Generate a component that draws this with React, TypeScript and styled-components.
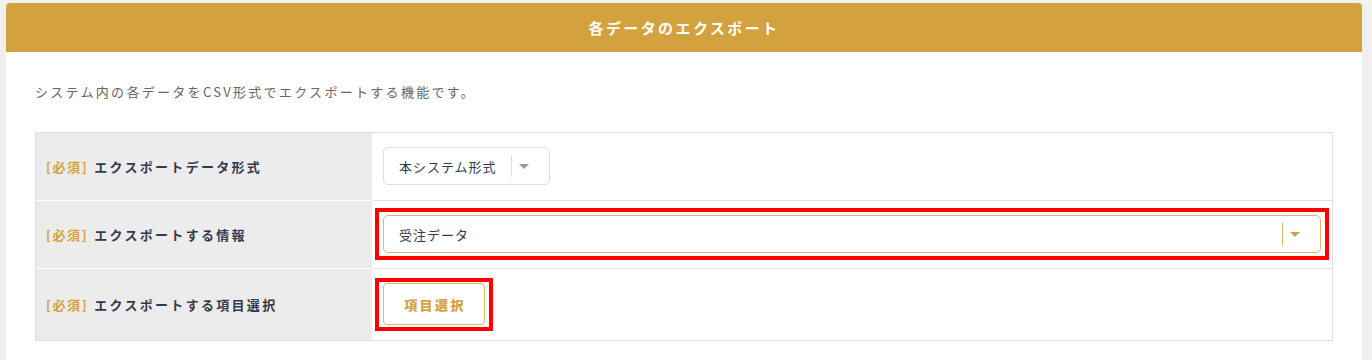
import { FC, ReactNode } from "react";
import styled, { createGlobalStyle } from "styled-components";

const GlobalStyle = createGlobalStyle`
  html, body {
    margin: 0;
    padding: 0;
    background: #f0f0ee;
    font-family: "Noto Sans CJK JP", "Noto Sans", sans-serif;
  }
`;

type Row = {
  label: string;
  content: ReactNode;
};

const Select: FC<{ value: string; active?: boolean; wide?: boolean }> = ({
  value,
  active,
  wide,
}) => (
  <StyledSelect $active={active} $wide={wide}>
    <StyledSelectValue>{value}</StyledSelectValue>
    <StyledDivider $active={active} />
    <StyledCaret $active={active} />
  </StyledSelect>
);

const App: FC = () => {
  const rows: Row[] = [
    {
      label: "エクスポートデータ形式",
      content: <Select value="本システム形式" />,
    },
    {
      label: "エクスポートする情報",
      content: (
        <StyledHighlight $inset="-7px -8px" $grow>
          <Select value="受注データ" active wide />
        </StyledHighlight>
      ),
    },
    {
      label: "エクスポートする項目選択",
      content: (
        <StyledHighlight $inset="-5px -8px -6px">
          <StyledButton>項目選択</StyledButton>
        </StyledHighlight>
      ),
    },
  ];

  return (
    <>
      <GlobalStyle />
      <StyledPage>
        <StyledCard>
          <StyledHeader>各データのエクスポート</StyledHeader>
          <StyledBody>
            <StyledDescription>
              システム内の各データをCSV形式でエクスポートする機能です。
            </StyledDescription>
            <StyledTable>
              {rows.map((row) => (
                <StyledRow key={row.label}>
                  <StyledLabelCell>
                    <StyledRequired>[必須]</StyledRequired>
                    {row.label}
                  </StyledLabelCell>
                  <StyledValueCell>{row.content}</StyledValueCell>
                </StyledRow>
              ))}
            </StyledTable>
          </StyledBody>
        </StyledCard>
      </StyledPage>
    </>
  );
};

export default App;

const gold = "#d3a23f";

const StyledPage = styled.div`
  padding: 3px 10px 0 6px;
`;

const StyledCard = styled.div`
  background: #fff;
  border-radius: 4px 4px 0 0;
  overflow: hidden;
`;

const StyledHeader = styled.div`
  height: 49px;
  background: ${gold};
  color: #fff;
  font-size: 15px;
  font-weight: bold;
  letter-spacing: 2.4px;
  display: flex;
  align-items: center;
  justify-content: center;
`;

const StyledBody = styled.div`
  padding: 30px 29px 20px;
`;

const StyledDescription = styled.p`
  margin: 0 0 30px;
  line-height: 20px;
  font-size: 13px;
  letter-spacing: 2.3px;
  color: #666;
`;

const StyledTable = styled.div`
  border: 1px solid #dedede;
`;

const StyledRow = styled.div`
  display: grid;
  grid-template-columns: 336px 1fr;
  & + & > div {
    border-top: 1px solid #e0e0e0;
  }
  & + & > div:first-child {
    border-top-color: #fff;
  }
`;

const StyledLabelCell = styled.div`
  background: #ececec;
  display: flex;
  align-items: center;
  padding-left: 10px;
  font-size: 13px;
  font-weight: bold;
  letter-spacing: 2.3px;
  color: #333a4f;
`;

const StyledRequired = styled.span`
  color: ${gold};
  margin-right: 6px;
  letter-spacing: 1.6px;
`;

const StyledValueCell = styled.div`
  display: flex;
  align-items: center;
  padding: 14px 11px 15px 11px;
  min-height: 38px;
`;

const StyledHighlight = styled.div<{ $inset: string; $grow?: boolean }>`
  position: relative;
  display: flex;
  flex: ${(p) => (p.$grow ? 1 : "0 0 auto")};
  &::after {
    content: "";
    position: absolute;
    inset: ${(p) => p.$inset};
    border: 4px solid #ff0000;
    pointer-events: none;
  }
`;

const StyledSelect = styled.div<{ $active?: boolean; $wide?: boolean }>`
  display: flex;
  align-items: center;
  height: 38px;
  box-sizing: border-box;
  flex: ${(p) => (p.$wide ? 1 : "0 0 auto")};
  padding: 0 20px 0 15px;
  border: 1px solid ${(p) => (p.$active ? "#dcb86d" : "#dddddd")};
  border-radius: 5px;
  background: #fff;
  font-size: 13px;
  letter-spacing: 1px;
  color: #333a4c;
`;

const StyledSelectValue = styled.span`
  flex: 1;
  padding-right: 14px;
`;

const StyledDivider = styled.span<{ $active?: boolean }>`
  width: 1px;
  height: 22px;
  background: ${(p) => (p.$active ? "#d8b262" : "#dddddd")};
`;

const StyledCaret = styled.span<{ $active?: boolean }>`
  margin-left: 7px;
  width: 0;
  height: 0;
  border-left: 5px solid transparent;
  border-right: 5px solid transparent;
  border-top: 5px solid ${(p) => (p.$active ? gold : "#999")};
`;

const StyledButton = styled.button`
  height: 42px;
  width: 102px;
  border: 1px solid #dcb86d;
  border-radius: 4px;
  background: #fff;
  color: ${gold};
  font-family: inherit;
  font-size: 13px;
  font-weight: 900;
  letter-spacing: 2.4px;
  padding: 0 0 0 2px;
`;
